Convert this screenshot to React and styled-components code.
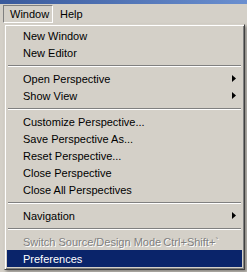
import React from "react";
import styled, { createGlobalStyle } from "styled-components";

const GlobalStyle = createGlobalStyle`
  html, body {
    margin: 0;
    padding: 0;
    background: #d4d0c8;
    overflow: hidden;
  }
  body {
    font-family: "Liberation Sans", Arial, sans-serif;
    font-size: 11px;
    color: #000;
  }
`;

const items = [
  { label: "New Window" },
  { label: "New Editor" },
  { sep: true },
  { label: "Open Perspective", sub: true },
  { label: "Show View", sub: true },
  { sep: true },
  { label: "Customize Perspective..." },
  { label: "Save Perspective As..." },
  { label: "Reset Perspective..." },
  { label: "Close Perspective" },
  { label: "Close All Perspectives" },
  { sep: true },
  { label: "Navigation", sub: true },
  { sep: true },
  { label: "Switch Source/Design Mode", shortcut: "Ctrl+Shift+`", disabled: true },
  { label: "Preferences", active: true },
];

function App() {
  return (
    <>
      <GlobalStyle />
      <Screen>
        <TitleBar />
        <MenuBar>
          <MenuTitle $open>Window</MenuTitle>
          <MenuTitle>Help</MenuTitle>
        </MenuBar>
        <Workspace>
          <Popup>
            {items.map((item, i) =>
              item.sep ? (
                <Separator key={i} />
              ) : (
                <Item key={i} $active={item.active} $disabled={item.disabled}>
                  <Label>{item.label}</Label>
                  {item.shortcut && <Shortcut>{item.shortcut}</Shortcut>}
                  {item.sub && (
                    <Arrow viewBox="0 0 4 7" width="4" height="7">
                      <path d="M0 0 L4 3.5 L0 7 Z" fill={item.active ? "#fff" : "#000"} />
                    </Arrow>
                  )}
                </Item>
              )
            )}
          </Popup>
        </Workspace>
      </Screen>
    </>
  );
}

export default App;

const Screen = styled.div`
  width: 247px;
  height: 272px;
  display: flex;
  flex-direction: column;
`;

const TitleBar = styled.div`
  height: 4px;
  flex: none;
  background: linear-gradient(to right, #3a5a9c, #6a8fd0);
`;

const MenuBar = styled.div`
  height: 20px;
  flex: none;
  display: flex;
  align-items: center;
  padding-left: 3px;
`;

const MenuTitle = styled.div`
  height: 18px;
  box-sizing: border-box;
  display: flex;
  align-items: center;
  padding: 0 6px 0 ${(p) => (p.$open ? 6 : 6)}px;
  width: ${(p) => (p.$open ? "50px" : "auto")};
  border: 1px solid transparent;
  border-color: ${(p) =>
    p.$open ? "#808080 #ffffff #ffffff #808080" : "transparent"};
  white-space: nowrap;
`;

const Workspace = styled.div`
  flex: 1;
  display: flex;
  align-items: flex-start;
  padding-left: 4px;
`;

const Popup = styled.div`
  width: 241px;
  box-sizing: border-box;
  background: #d4d0c8;
  border: 1px solid;
  border-color: #d4d0c8 #404040 #404040 #d4d0c8;
  box-shadow: inset 1px 1px 0 #ffffff, inset -1px -1px 0 #808080,
    2px 2px 3px rgba(0, 0, 0, 0.35);
  padding: 2px 2px 2px 2px;
  display: flex;
  flex-direction: column;
`;

const Item = styled.div`
  height: 17px;
  display: flex;
  align-items: center;
  padding-left: 16px;
  padding-right: 6px;
  white-space: nowrap;
  background: ${(p) => (p.$active ? "#0a246a" : "transparent")};
  color: ${(p) => (p.$active ? "#ffffff" : p.$disabled ? "#808080" : "#000")};
  text-shadow: ${(p) => (p.$disabled ? "1px 1px 0 #ffffff" : "none")};
`;

const Label = styled.span`
  flex: 1;
`;

const Shortcut = styled.span`
  padding-right: 17px;
`;

const Arrow = styled.svg`
  display: block;
  flex: none;
`;

const Separator = styled.div`
  height: 9px;
  box-sizing: border-box;
  margin: 0 1px;
  padding-top: 4px;
  &::before {
    content: "";
    display: block;
    height: 1px;
    background: #808080;
    border-bottom: 1px solid #ffffff;
  }
`;
